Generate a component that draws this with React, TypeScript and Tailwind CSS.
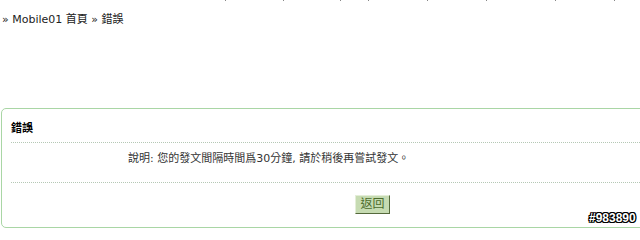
import React from "react";

const ticks = [225, 283, 340, 368, 427, 486, 555, 614];

export default function App() {
  return (
    <div
      className="relative w-[640px] h-[229px] overflow-hidden bg-white text-[#333]"
      style={{ fontFamily: '"DejaVu Sans", Verdana, "Noto Sans CJK TC", sans-serif' }}
    >
      {ticks.map((x) => (
        <div key={x} className="absolute top-0 w-px h-px bg-[#888]" style={{ left: x }} />
      ))}
      <div className="pt-[13px] pl-[2px] text-[11px] leading-[14px] text-[#222]">
        » Mobile01 首頁 » 錯誤
      </div>
      <div className="mt-[81px] ml-px w-[743px] h-[120px] border border-[#a9d6a5] rounded-[5px] px-[9px]">
        <div className="pt-[13px] h-[34px] text-[11px] font-bold leading-[14px] text-black border-b border-dotted border-[#b5c8b5]">
          錯誤
        </div>
        <div className="h-[40px] pl-[117px] pt-[9px] text-[11px] leading-[14px] text-[#333] border-b border-dotted border-[#b5c8b5]">
          說明: 您的發文間隔時間爲30分鐘, 請於稍後再嘗試發文。
        </div>
        <div className="flex justify-center pt-[12px]">
          <button className="h-[19px] px-[4px] text-[12px] leading-[15px] bg-[#c6dbb2] text-[#4b6b2b] border border-t-[#e4eed8] border-l-[#e4eed8] border-r-[#55693c] border-b-[#55693c]">
            返回
          </button>
        </div>
      </div>
      <div
        className="absolute left-[589px] top-[212px] text-[12px] font-bold leading-[13px] text-white"
        style={{
          fontFamily: '"Liberation Sans", Arial, sans-serif',
          textShadow:
            "1px 0 0 #000, -1px 0 0 #000, 0 1px 0 #000, 0 -1px 0 #000, 1px 1px 0 #000, -1px -1px 0 #000, 1px -1px 0 #000, -1px 1px 0 #000",
        }}
      >
        #983890
      </div>
    </div>
  );
}
